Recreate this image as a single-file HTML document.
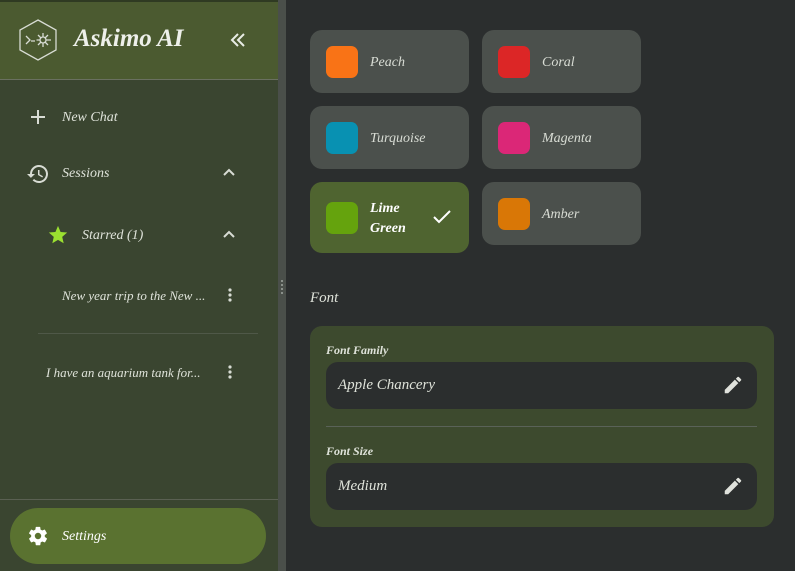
<!DOCTYPE html>
<html><head><style>
*{margin:0;padding:0;box-sizing:border-box}
body{width:795px;height:571px;overflow:hidden;background:#2b2e2e;font-family:"Liberation Serif",serif;font-style:italic;color:#dfe3da;position:relative}
.abs{position:absolute}
.side{left:0;top:0;width:278px;height:571px;background:#3a4530}
.hdr{left:0;top:0;width:278px;height:80px;background:#4b5a30;border-top:2px solid #2f3a22;border-bottom:1px solid #6a7060}
.split{left:278px;top:0;width:8px;height:571px;background:#4a4f4a}
.t{position:absolute;white-space:nowrap;font-size:14px}
.card{position:absolute;width:159px;height:63px;background:#4b504c;border-radius:12px}
.sw{position:absolute;left:16px;top:16px;width:32px;height:32px;border-radius:7px}
.card .t{left:60px;top:25px;color:#d8dcd4}
.field{position:absolute;left:16px;width:431px;height:47px;background:#2b2e2e;border-radius:12px}
</style></head><body>
<div class="abs side"></div>
<div class="abs hdr"></div>
<svg class="abs" style="left:18px;top:19px" width="40" height="42" viewBox="0 0 40 42" fill="none" stroke="#d8dcd4" stroke-width="1.3"><path d="M20 1 L38 11 L38 31 L20 41 L2 31 L2 11 Z"/><path d="M8 17 L12 21 L8 25 M13 22 h4"/><circle cx="25" cy="21" r="3"/><path d="M25 14v4M25 24v4M18.5 21h3.5M28 21h5M20 16l3 3M30 16l-3 3M20 26l3-3M30 26l-3-3"/></svg>
<div class="t" style="left:74px;top:25px;font-size:25px;font-weight:bold;color:#eef0ea">Askimo AI</div>
<svg class="abs" style="left:230px;top:33px" width="16" height="14"><path d="M8 1L2 7l6 6M14 1L8 7l6 6" stroke="#e8ece4" stroke-width="2" fill="none"/></svg>
<svg class="abs" style="left:30px;top:109px" width="16" height="16"><path d="M8 1v14M1 8h14" stroke="#d8dcd4" stroke-width="2"/></svg>
<div class="t" style="left:62px;top:110px">New Chat</div>
<svg class="abs" style="left:26px;top:162px" width="24" height="24" viewBox="0 0 24 24"><path fill="#d8dcd4" d="M13 3a9 9 0 0 0-9 9H1l3.9 3.9L9 12H6a7 7 0 1 1 2.05 4.95l-1.42 1.42A9 9 0 1 0 13 3zm-1 5v5l4.3 2.5.7-1.2-3.5-2.1V8z"/></svg>
<div class="t" style="left:62px;top:166px">Sessions</div>
<svg class="abs" style="left:222px;top:167px" width="14" height="10"><path d="M2 8l5-5 5 5" stroke="#d8dcd4" stroke-width="2" fill="none"/></svg>
<svg class="abs" style="left:47px;top:224px" width="22" height="22" viewBox="0 0 24 24"><path fill="#9be030" d="M12 17.3l6.2 3.7-1.6-7 5.4-4.7-7.2-.6L12 2 9.2 8.7l-7.2.6 5.4 4.7-1.6 7z"/></svg>
<div class="t" style="left:82px;top:228px">Starred (1)</div>
<svg class="abs" style="left:222px;top:229px" width="14" height="10"><path d="M2 8l5-5 5 5" stroke="#d8dcd4" stroke-width="2" fill="none"/></svg>
<div class="t" style="left:62px;top:288px;font-size:13px">New year trip to the New ...</div>
<svg class="abs" style="left:227px;top:287px" width="6" height="16"><circle cx="3" cy="3" r="1.6" fill="#d8dcd4"/><circle cx="3" cy="8" r="1.6" fill="#d8dcd4"/><circle cx="3" cy="13" r="1.6" fill="#d8dcd4"/></svg>
<div class="abs" style="left:38px;top:333px;width:220px;height:1px;background:#4f5848"></div>
<div class="t" style="left:46px;top:365px;font-size:13px">I have an aquarium tank for...</div>
<svg class="abs" style="left:227px;top:364px" width="6" height="16"><circle cx="3" cy="3" r="1.6" fill="#d8dcd4"/><circle cx="3" cy="8" r="1.6" fill="#d8dcd4"/><circle cx="3" cy="13" r="1.6" fill="#d8dcd4"/></svg>
<div class="abs" style="left:0;top:499px;width:278px;height:1px;background:#5a6052"></div>
<div class="abs" style="left:10px;top:508px;width:256px;height:56px;background:#5a7230;border-radius:28px"></div>
<svg class="abs" style="left:27px;top:525px" width="22" height="22" viewBox="0 0 24 24"><path fill="#fff" d="M19.4 13c.04-.33.06-.66.06-1s-.02-.67-.06-1l2.1-1.650c.2-.15.25-.42.12-.64l-2-3.46c-.12-.22-.39-.3-.61-.22l-2.49 1a7.3 7.3 0 0 0-1.730-1l-.38-2.65A.49.49 0 0 0 14 2h-4c-.25 0-.46.18-.49.42l-.38 2.65c-.61.25-1.170.59-1.730 1l-2.49-1c-.23-.09-.49 0-.61.22l-2 3.46c-.13.22-.07.49.12.64L4.57 11c-.04.33-.07.67-.07 1s.03.67.07 1l-2.11 1.65c-.19.15-.24.42-.12.64l2 3.46c.12.22.39.3.61.22l2.49-1c.52.4 1.08.73 1.73 1l.38 2.65c.03.24.24.42.49.42h4c.25 0 .46-.18.49-.42l.38-2.65c.61-.25 1.17-.59 1.73-1l2.49 1c.23.09.49 0 .61-.22l2-3.46c.12-.22.07-.49-.12-.64zM12 15.5A3.5 3.5 0 1 1 12 8.5a3.5 3.5 0 0 1 0 7z"/></svg>
<div class="t" style="left:62px;top:529px;color:#fff">Settings</div>
<div class="abs split"></div>
<div class="abs" style="left:281px;top:280px;width:2px;height:14px;border-left:2px dotted #8a908a"></div>

<div class="card" style="left:310px;top:30px"><div class="sw" style="background:#f97316"></div><div class="t">Peach</div></div>
<div class="card" style="left:482px;top:30px"><div class="sw" style="background:#dc2626"></div><div class="t">Coral</div></div>
<div class="card" style="left:310px;top:106px"><div class="sw" style="background:#0891b2"></div><div class="t">Turquoise</div></div>
<div class="card" style="left:482px;top:106px"><div class="sw" style="background:#db2777"></div><div class="t">Magenta</div></div>
<div class="card" style="left:310px;top:182px;height:71px;background:#4f6430"><div class="sw" style="top:20px;background:#65a30d"></div><div class="t" style="top:17px;line-height:20px;color:#fff;font-weight:bold">Lime<br>Green</div>
<svg class="abs" style="left:122px;top:27px" width="20" height="16"><path d="M2 8l5 5L18 2" stroke="#fff" stroke-width="2" fill="none"/></svg></div>
<div class="card" style="left:482px;top:182px"><div class="sw" style="background:#d97706"></div><div class="t">Amber</div></div>

<div class="t" style="left:310px;top:290px;font-size:15px">Font</div>
<div class="abs" style="left:310px;top:326px;width:464px;height:201px;background:#3d4a2e;border-radius:12px">
<div class="t" style="left:16px;top:17px;font-size:12px;font-weight:bold">Font Family</div>
<div class="field" style="top:36px"><div class="t" style="left:12px;top:15px;font-size:15px">Apple Chancery</div>
<svg class="abs" style="left:396px;top:12px" width="22" height="22" viewBox="0 0 24 24"><path fill="#e0e2dc" d="M3 17.25V21h3.75L17.8 9.94l-3.75-3.75zM20.7 7.04a1 1 0 0 0 0-1.41l-2.34-2.34a1 1 0 0 0-1.41 0l-1.83 1.83 3.75 3.75z"/></svg></div>
<div class="abs" style="left:16px;top:100px;width:431px;height:1px;background:#5a6258"></div>
<div class="t" style="left:16px;top:118px;font-size:12px;font-weight:bold">Font Size</div>
<div class="field" style="top:137px"><div class="t" style="left:12px;top:15px;font-size:15px">Medium</div>
<svg class="abs" style="left:396px;top:12px" width="22" height="22" viewBox="0 0 24 24"><path fill="#e0e2dc" d="M3 17.25V21h3.75L17.8 9.94l-3.75-3.75zM20.7 7.04a1 1 0 0 0 0-1.41l-2.34-2.34a1 1 0 0 0-1.41 0l-1.83 1.83 3.75 3.75z"/></svg></div>
</div>
</body></html>
